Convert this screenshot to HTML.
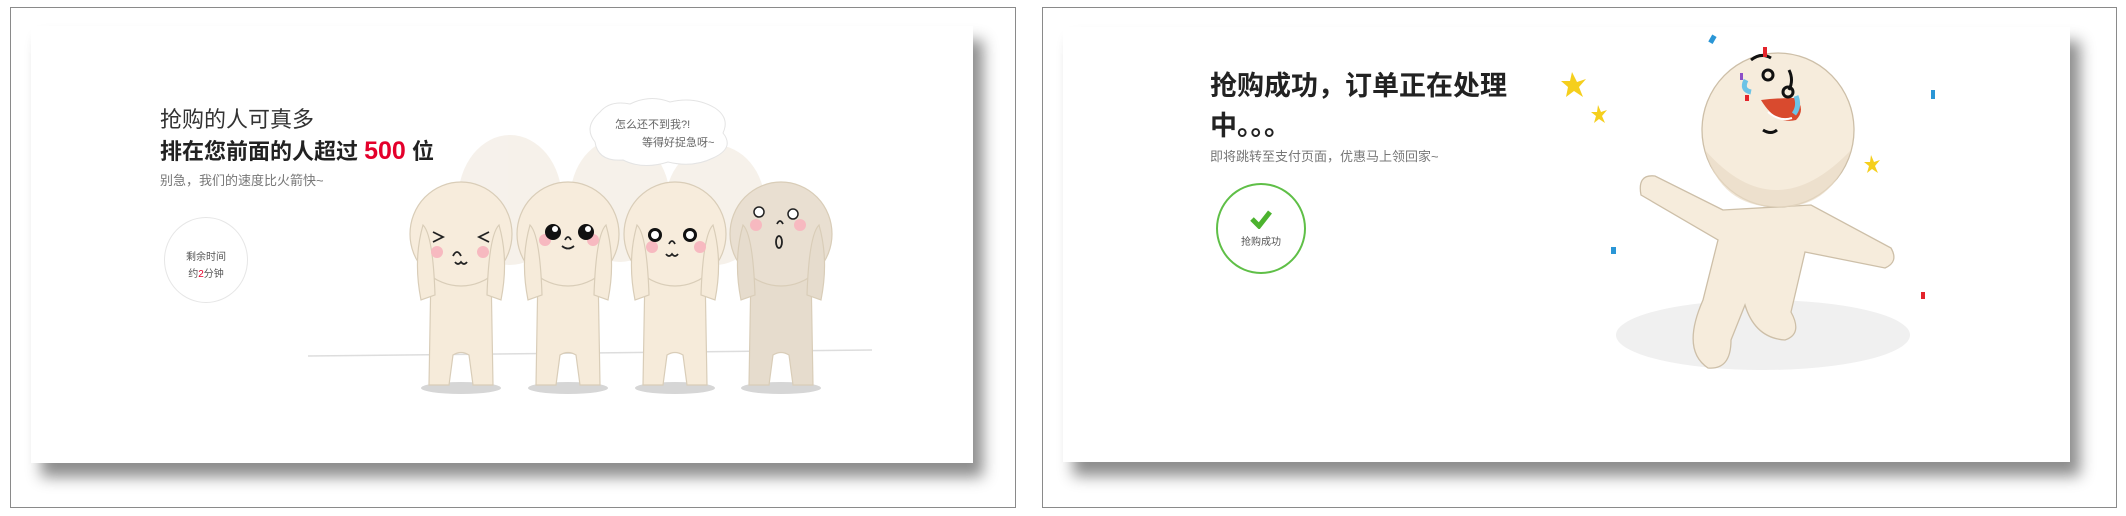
<!DOCTYPE html>
<html><head><meta charset="utf-8"><style>
html,body{margin:0;padding:0;background:#fff;}
body{width:2126px;height:516px;position:relative;overflow:hidden;font-family:"Liberation Sans","Noto Sans CJK SC",sans-serif;}
.frame{position:absolute;border:1.5px solid #8a8a8a;box-sizing:border-box;background:#fff;}
.card{position:absolute;background:#fff;box-shadow:10px 14px 14px rgba(0,0,0,.45);}
.t{position:absolute;white-space:nowrap;color:#333;}
</style></head><body>
<div class="frame" style="left:10px;top:7px;width:1006px;height:501px"></div>
<div class="frame" style="left:1042px;top:7px;width:1075px;height:501px"></div>

<div class="card" style="left:31px;top:26px;width:942px;height:437px"></div>
<div class="card" style="left:1063px;top:27px;width:1007px;height:435px"></div>

<div class="t" style="left:160px;top:102px;font-size:22px;color:#333">抢购的人可真多</div>
<div class="t" style="left:160px;top:134px;font-size:22px;font-weight:bold;color:#222">排在您前面的人超过 <span style="color:#e4002b;font-size:25px">500</span> 位</div>
<div class="t" style="left:160px;top:170px;font-size:13px;color:#777">别急，我们的速度比火箭快~</div>
<div style="position:absolute;left:164px;top:217px;width:84px;height:86px;border-radius:50%;border:1px solid #e6e6e6;box-sizing:border-box"></div>
<div class="t" style="left:164px;top:249px;width:84px;text-align:center;font-size:10px;line-height:17px;color:#555">剩余时间<br>约<span style="color:#e4002b">2</span>分钟</div>

<svg style="position:absolute;left:0;top:0" width="1063" height="516">
 <line x1="308" y1="356" x2="872" y2="350" stroke="#ddd" stroke-width="1.5"/>
 <g fill="#f4eee6" opacity=".8">
  <ellipse cx="510" cy="200" rx="52" ry="65"/><ellipse cx="620" cy="200" rx="50" ry="62"/><ellipse cx="715" cy="205" rx="50" ry="60"/>
 </g>
 <path d="M600 112 q10-12 30-8 q20-10 40-2 q25-6 45 6 q15 10 8 25 q12 15-10 25 q-20 10-45 4 q-25 8-45-2 q-25 2-28-18 q-12-15 5-30z" fill="#fff" stroke="#e4e4e4"/>
 <text x="615" y="128" font-size="11" fill="#666" font-family="Liberation Sans,Noto Sans CJK SC,sans-serif">怎么还不到我?!</text>
 <text x="642" y="146" font-size="11" fill="#666" font-family="Liberation Sans,Noto Sans CJK SC,sans-serif">等得好捉急呀~</text>
 <g stroke="#d9cdb8" stroke-width="1.2">
 <g transform="translate(461,0)"><ellipse cx="0" cy="388" rx="40" ry="6" fill="#d6d6d6" stroke="none"/><path d="M-30 270 L-32 385 L-12 385 L-8 355 Q0 350 8 355 L12 385 L32 385 L30 270 Z" fill="#f6ebda"/><ellipse cx="0" cy="234" rx="51" ry="52" fill="#f7ecdc"/><path d="M-40 300 q-8-40 2-75 q10 10 12 70z M40 300 q8-40-2-75 q-10 10-12 70z" fill="#f6ebda"/></g>
 <g transform="translate(568,0)"><ellipse cx="0" cy="388" rx="40" ry="6" fill="#d6d6d6" stroke="none"/><path d="M-30 270 L-32 385 L-12 385 L-8 355 Q0 350 8 355 L12 385 L32 385 L30 270 Z" fill="#f6ebda"/><ellipse cx="0" cy="234" rx="51" ry="52" fill="#f7ecdc"/><path d="M-40 300 q-8-40 2-75 q10 10 12 70z M40 300 q8-40-2-75 q-10 10-12 70z" fill="#f6ebda"/></g>
 <g transform="translate(675,0)"><ellipse cx="0" cy="388" rx="40" ry="6" fill="#d6d6d6" stroke="none"/><path d="M-30 270 L-32 385 L-12 385 L-8 355 Q0 350 8 355 L12 385 L32 385 L30 270 Z" fill="#f6ebda"/><ellipse cx="0" cy="234" rx="51" ry="52" fill="#f7ecdc"/><path d="M-40 300 q-8-40 2-75 q10 10 12 70z M40 300 q8-40-2-75 q-10 10-12 70z" fill="#f6ebda"/></g>
 <g transform="translate(781,0)"><ellipse cx="0" cy="388" rx="40" ry="6" fill="#d6d6d6" stroke="none"/><path d="M-30 270 L-32 385 L-12 385 L-8 355 Q0 350 8 355 L12 385 L32 385 L30 270 Z" fill="#e6dccd"/><ellipse cx="0" cy="234" rx="51" ry="52" fill="#e9dfd1"/><path d="M-40 300 q-8-40 2-75 q10 10 12 70z M40 300 q8-40-2-75 q-10 10-12 70z" fill="#e6dccd"/></g>
 </g>
 <g fill="#f7b9c0">
  <circle cx="437" cy="252" r="6"/><circle cx="483" cy="252" r="6"/>
  <circle cx="545" cy="240" r="6"/><circle cx="593" cy="240" r="6"/>
  <circle cx="652" cy="247" r="6"/><circle cx="700" cy="247" r="6"/>
  <circle cx="756" cy="225" r="6"/><circle cx="800" cy="225" r="6"/>
 </g>
 <g stroke="#222" stroke-width="1.8" fill="none">
  <path d="M433 232 l10 5 l-10 5 M489 232 l-10 5 l10 5"/>
  <path d="M453 256 q4-8 8 0 M455 262 q3 4 6 0 q3 4 6 0"/>
  <path d="M562 246 q6 5 12 0 M565 240 q3-6 6 0"/>
  <path d="M669 244 q3-6 6 0 M666 254 q3 4 6 0 q3 4 6 0"/>
  <path d="M777 224 q3-6 6 0"/><ellipse cx="779" cy="242" rx="3" ry="6"/>
 </g>
 <g fill="#111"><circle cx="553" cy="232" r="8"/><circle cx="586" cy="232" r="8"/>
  <circle cx="655" cy="235" r="7"/><circle cx="690" cy="235" r="7"/></g>
 <g fill="#fff"><circle cx="555" cy="229" r="3"/><circle cx="588" cy="229" r="3"/><circle cx="655" cy="235" r="4"/><circle cx="690" cy="235" r="4"/>
  <circle cx="759" cy="212" r="5" stroke="#222" stroke-width="1.5"/><circle cx="793" cy="214" r="5" stroke="#222" stroke-width="1.5"/></g>
</svg>

<div class="t" style="left:1210px;top:64px;font-size:27px;font-weight:bold;color:#222">抢购成功，订单正在处理</div>
<div class="t" style="left:1210px;top:104px;font-size:27px;font-weight:bold;color:#222">中。。。</div>
<div class="t" style="left:1210px;top:146px;font-size:13px;color:#777">即将跳转至支付页面，优惠马上领回家~</div>
<div style="position:absolute;left:1216px;top:183px;width:90px;height:91px;border-radius:50%;border:2px solid #5fbf47;box-sizing:border-box"></div>
<svg style="position:absolute;left:1250px;top:209px" width="22" height="20"><path d="M2 10 L9 17 L20 3" stroke="#4cb32f" stroke-width="5" fill="none"/></svg>
<div class="t" style="left:1216px;top:233px;width:90px;text-align:center;font-size:10px;color:#555">抢购成功</div>

<svg style="position:absolute;left:1063px;top:0" width="1063" height="516">
 <ellipse cx="700" cy="335" rx="147" ry="35" fill="#f0f0f0"/>
 <path d="M660 210 L592 176 Q574 174 578 195 L655 240 L640 300 Q618 350 645 368 Q668 370 668 340 L682 305 Q692 338 722 340 Q740 334 728 312 L742 252 L822 268 Q836 262 828 248 L748 205 Z" fill="#f6ecdc" stroke="#cdbfa8" stroke-width="1.3"/>
 <ellipse cx="715" cy="130" rx="76" ry="77" fill="#f6ecdc" stroke="#cdbfa8" stroke-width="1.3"/>
 <path d="M642 150 q70 80 146 0 q-20 60-75 57 q-55 0-71-57z" fill="#e9dcc6" opacity=".7"/>
 <path d="M698 100 q15 25 35 20 q10-10 0-22 q-20 0-35 2z" fill="#d94a2e"/>
 <path d="M705 112 q12 10 24 6" stroke="#fff" fill="none" stroke-width="2"/>
 <g stroke="#111" stroke-width="3" fill="none"><path d="M688 60 q10-8 20-2 M726 70 q5 10 0 20"/><circle cx="705" cy="75" r="5"/><circle cx="725" cy="92" r="5"/><path d="M700 130 q8 5 14 0"/></g>
 <path d="M683 80 q-5 10 5 12" stroke="#6cc3e6" stroke-width="5" fill="none"/>
 <path d="M733 96 q4 10-2 18" stroke="#6cc3e6" stroke-width="5" fill="none"/>
 <g fill="#f5cf1d"><path d="M509 72 l5 10 l9 -3 l-7 8 l4 10 l-9-6 l-8 6 l2-10 l-7-6 l9 0z"/><path d="M535 105 l3 7 l6-2 l-5 6 l3 7 l-6-4 l-5 4 l2-7 l-5-4 l6 0z"/><path d="M808 155 l3 7 l6-2 l-5 6 l3 7 l-6-4 l-5 4 l2-7 l-5-4 l6 0z"/></g>
 <g><rect x="647" y="35" width="5" height="8" fill="#2a96d6" transform="rotate(30 649 39)"/><rect x="700" y="47" width="4" height="10" fill="#e3242b"/><rect x="677" y="73" width="3" height="7" fill="#8c4fc7"/><rect x="682" y="95" width="4" height="6" fill="#e3242b"/><rect x="868" y="90" width="4" height="9" fill="#2a96d6"/><rect x="548" y="247" width="5" height="7" fill="#2a96d6"/><rect x="858" y="292" width="4" height="7" fill="#e3242b"/></g>
</svg>
</body></html>
